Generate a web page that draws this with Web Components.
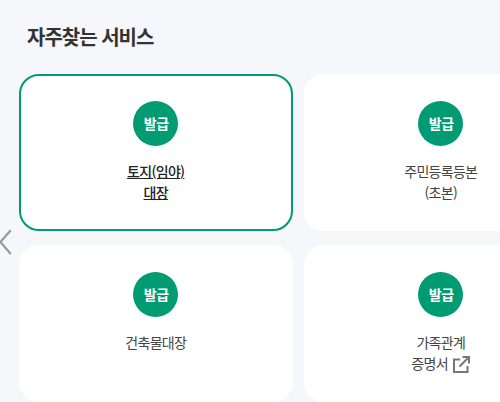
<!DOCTYPE html>
<html lang="ko">
<head>
<meta charset="utf-8">
<title>자주찾는 서비스</title>
<style>
  html, body { margin: 0; padding: 0; width: 500px; height: 402px; overflow: hidden; background: #f5f7fb; }
  body { font-family: "Noto Sans CJK KR", "Noto Sans", sans-serif; color: #333; }
</style>
</head>
<body>
<favorite-services heading="자주찾는 서비스">
  <service-card active label="토지(임야)|대장"></service-card>
  <service-card label="주민등록등본|(초본)"></service-card>
  <service-card label="건축물대장"></service-card>
  <service-card external label="가족관계|증명서"></service-card>
</favorite-services>

<script>
class favoriteServices extends HTMLElement {
  constructor() {
    super()
    this.attachShadow({ mode: "open" })
  }
  connectedCallback() {
    this.shadowRoot.innerHTML = `
      <style>
        :host {
          display: block;
          position: relative;
          width: 500px;
          height: 402px;
          overflow: hidden;
        }
        h2 {
          margin: 0;
          padding: 22px 0 0 27px;
          height: 74px;
          box-sizing: border-box;
          font-size: 20px;
          line-height: 30px;
          font-weight: 700;
          letter-spacing: -1px;
          color: #333;
        }
        .grid {
          display: grid;
          grid-template-columns: 273.5px 273.5px;
          grid-auto-rows: 157px;
          column-gap: 11.5px;
          row-gap: 14px;
          padding-left: 19px;
        }
        .prev {
          position: absolute;
          left: 0;
          top: 229px;
        }
      </style>
      <h2>${this.getAttribute("heading")}</h2>
      <div class="grid"><slot></slot></div>
      <svg class="prev" width="12" height="27" viewBox="0 0 12 27" fill="none">
        <path d="M10.8 1.2 L0.4 13 L10.8 25" stroke="#999" stroke-width="2.2"/>
      </svg>
    `
  }
}

class serviceCard extends HTMLElement {
  constructor() {
    super()
    this.attachShadow({ mode: "open" })
  }
  connectedCallback() {
    const lines = this.getAttribute("label").split("|")
    const icon = this.hasAttribute("external") ? `
      <svg class="ext" width="17" height="17" viewBox="0 0 17 17" fill="none" stroke="#777" stroke-width="2">
        <path d="M7 3.5 H1 V16 H14.5 V10"/>
        <path d="M6.5 10.5 L15.5 1.5 M9.5 1 H16 V7.5"/>
      </svg>` : ""
    this.shadowRoot.innerHTML = `
      <style>
        :host {
          display: block;
          box-sizing: border-box;
          padding-top: 27px;
          background: #fff;
          border-radius: 20px;
          text-align: center;
        }
        :host([active]) {
          padding-top: 25px;
          border: 2px solid #009b72;
        }
        .badge {
          display: flex;
          align-items: center;
          justify-content: center;
          box-sizing: border-box;
          width: 45px;
          height: 45px;
          margin: 0 auto 15px;
          padding: 0 0 2px 1px;
          border-radius: 50%;
          background: #009b72;
          color: #fff;
          font-size: 14px;
          font-weight: 700;
          letter-spacing: -0.5px;
        }
        .label {
          font-size: 14px;
          line-height: 21px;
          letter-spacing: -0.7px;
          color: #444;
        }
        :host([active]) .label {
          font-weight: 500;
          color: #222;
          text-decoration: underline;
        }
        .ext {
          vertical-align: -4px;
          margin-left: 2px;
        }
      </style>
      <div class="badge">발급</div>
      <div class="label">${lines.join("<br>")}${icon}</div>
    `
  }
}

customElements.define("favorite-services", favoriteServices)
customElements.define("service-card", serviceCard)
</script>
</body>
</html>
